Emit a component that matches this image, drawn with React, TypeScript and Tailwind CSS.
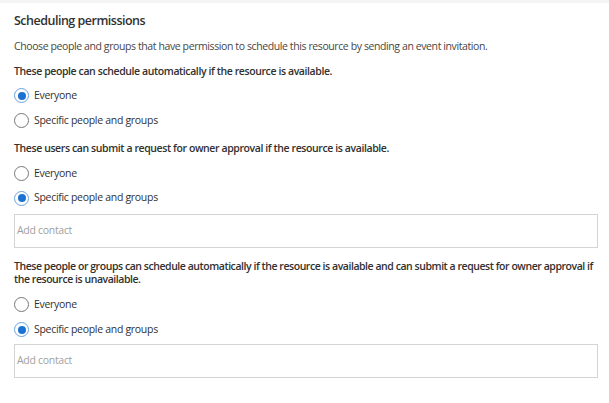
import React from "react";

type Choice = "everyone" | "specific";

function Radio({ checked, label }: { checked: boolean; label: string }) {
    return (
        <label className="flex items-center h-[25px] gap-[5px] cursor-pointer">
            <span
                className={
                    checked
                        ? "w-[15px] h-[15px] rounded-full border border-[#6aa3db] flex items-center justify-center"
                        : "w-[15px] h-[15px] rounded-full border border-[#7a7876] flex items-center justify-center"
                }
            >
                {checked && <span className="w-[8px] h-[8px] rounded-full bg-[#1a73d3]" />}
            </span>
            <span className="text-[10.5px] tracking-[-0.3px] text-[#323130]">{label}</span>
        </label>
    );
}

function Group({ value }: { value: Choice }) {
    return (
        <div className="flex flex-col">
            <Radio checked={value === "everyone"} label="Everyone" />
            <Radio checked={value === "specific"} label="Specific people and groups" />
        </div>
    );
}

function ContactBox() {
    return (
        <div className="h-[34px] border border-[#d4d4d4] flex items-center px-[2px]">
            <span className="text-[10.5px] tracking-[-0.3px] text-[#a19f9d]">Add contact</span>
        </div>
    );
}

export default function App() {
    return (
        <div
            className="w-[609px] h-[403px] bg-white overflow-hidden"
            style={{ fontFamily: "'Open Sans', 'Noto Sans', sans-serif" }}
        >
            <div className="h-[3px] bg-[#f4f4f4]" />
            <div className="pl-[14px] pr-[11px]">
                <h2 className="mt-[8px] text-[12.5px] tracking-[-0.5px] leading-[20px] font-semibold text-[#323130]">
                    Scheduling permissions
                </h2>
                <p className="mt-[7px] text-[10.5px] tracking-[-0.4px] leading-[16px] text-[#484644]">
                    Choose people and groups that have permission to schedule this resource by sending an event invitation.
                </p>
                <p className="mt-[9px] text-[10.5px] tracking-[-0.4px] leading-[16px] font-semibold text-[#323130]">
                    These people can schedule automatically if the resource is available.
                </p>
                <div className="mt-[4px]">
                    <Group value="everyone" />
                </div>
                <p className="mt-[7px] text-[10.5px] tracking-[-0.4px] leading-[16px] font-semibold text-[#323130]">
                    These users can submit a request for owner approval if the resource is available.
                </p>
                <div className="mt-[5px] [&>div>label:last-child]:h-[24px]">
                    <Group value="specific" />
                </div>
                <div className="mt-[4px]">
                    <ContactBox />
                </div>
                <p className="mt-[12px] text-[10.5px] tracking-[-0.45px] leading-[13px] font-semibold text-[#323130]">
                    <span className="whitespace-nowrap">
                        These people or groups can schedule automatically if the resource is available and can submit a request for owner approval if
                    </span>
                    <br />
                    the resource is unavailable.
                </p>
                <div className="mt-[6px]">
                    <Group value="specific" />
                </div>
                <div className="mt-[2px]">
                    <ContactBox />
                </div>
            </div>
        </div>
    );
}
